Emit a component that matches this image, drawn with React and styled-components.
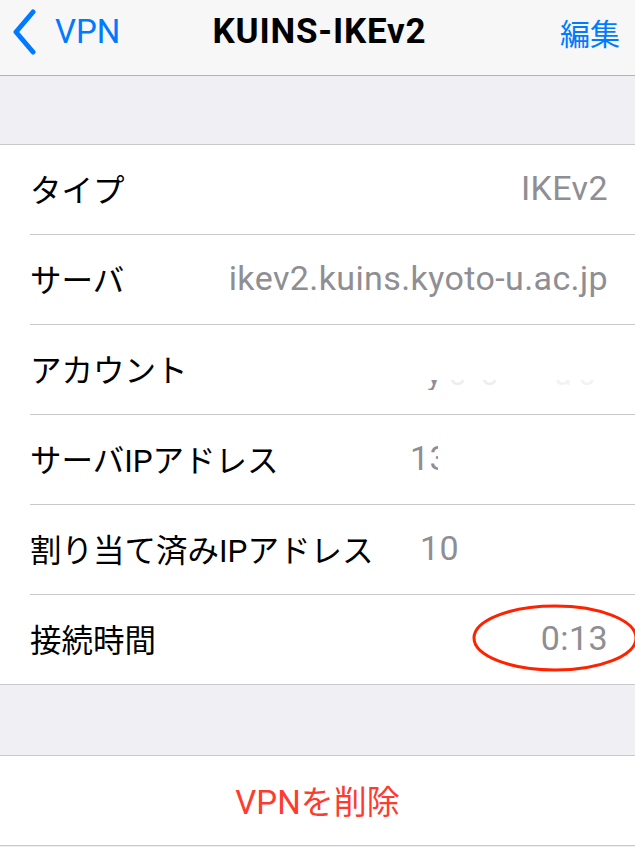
import React from "react";
import styled, { createGlobalStyle } from "styled-components";

const GlobalStyle = createGlobalStyle`
  html, body {
    margin: 0;
    padding: 0;
    background: #efeff4;
  }
  body {
    font-family: Roboto, "Noto Sans CJK JP", sans-serif;
    -webkit-font-smoothing: antialiased;
  }
`;

const Screen = styled.div`
  width: 635px;
  min-height: 847px;
  background: #efeff4;
  overflow: hidden;
`;

const NavBar = styled.div`
  height: 75px;
  background: #f7f7f8;
  border-bottom: 1px solid #b2b2b2;
  display: grid;
  grid-template-columns: 1fr auto 1fr;
  align-items: center;
  padding: 0 15px 0 11px;
`;

const BackButton = styled.div`
  display: flex;
  align-items: center;
  gap: 18px;
  color: #007aff;
  font-size: 33px;
  padding-bottom: 12px;
`;

const Title = styled.div`
  font-size: 35px;
  font-weight: 700;
  letter-spacing: 0.8px;
  color: #000;
  padding-bottom: 12px;
  transform: translateX(4px);
`;

const EditButton = styled.div`
  justify-self: end;
  color: #007aff;
  font-size: 30px;
  padding-bottom: 12px;
`;

const Spacer = styled.div`
  height: ${p => p.$h}px;
`;

const Group = styled.div`
  background: #fff;
  border-top: 1px solid #c8c7cc;
  border-bottom: 1px solid #c8c7cc;
`;

const Row = styled.div`
  position: relative;
  height: 89px;
  display: flex;
  align-items: center;
  padding-left: 30px;
  & + & {
    border-top: 1px solid transparent;
  }
  & + &::before {
    content: "";
    position: absolute;
    top: -1px;
    left: 30px;
    right: 0;
    height: 1px;
    background: #c8c7cc;
  }
`;

const Label = styled.div`
  font-size: 31.5px;
  color: #000;
  white-space: nowrap;
  padding-bottom: 4px;
`;

const Value = styled.div`
  margin-left: auto;
  margin-right: ${p => p.$offset || 27}px;
  font-size: 34px;
  letter-spacing: 0.4px;
  color: #8e8e93;
  white-space: nowrap;
  overflow: hidden;
  padding-bottom: 4px;
  ${p => (p.$clip ? `width: ${p.$clip}px;` : "")}
`;

const FaintDot = styled.span`
  color: #d8d8dc;
`;

const Scrap = styled.div`
  margin-left: auto;
  margin-right: 26px;
  width: 190px;
  height: 10px;
  margin-top: 30px;
  position: relative;
  overflow: hidden;
`;

const ScrapText = styled.span`
  position: absolute;
  left: 0;
  bottom: 0;
  line-height: 30px;
  font-size: 30px;
  color: ${p => p.$color};
  white-space: nowrap;
`;

const Annotation = styled.svg`
  position: absolute;
  right: -6px;
  top: 8px;
  pointer-events: none;
`;

const DeleteRow = styled.div`
  height: 89px;
  display: flex;
  align-items: center;
  justify-content: center;
  color: #ff3b30;
  font-size: 33px;
  padding-bottom: 2px;
  box-sizing: border-box;
`;

const Chevron = () => (
  <svg width="26" height="46" viewBox="0 0 26 46">
    <path
      d="M22 3 L5 23 L22 43"
      fill="none"
      stroke="#007aff"
      strokeWidth="5"
      strokeLinecap="round"
      strokeLinejoin="round"
    />
  </svg>
);

export default function App() {
  return (
    <Screen>
      <GlobalStyle />
      <NavBar>
        <BackButton>
          <Chevron />
          VPN
        </BackButton>
        <Title>KUINS-IKEv2</Title>
        <EditButton>編集</EditButton>
      </NavBar>
      <Spacer $h={68} />
      <Group>
        <Row>
          <Label>タイプ</Label>
          <Value>IKEv2</Value>
        </Row>
        <Row>
          <Label>サーバ</Label>
          <Value>ikev2.kuins.kyoto-u.ac.jp</Value>
        </Row>
        <Row>
          <Label>アカウント</Label>
          <Scrap>
            <ScrapText $color="#8e8e93" style={{ left: 8 }}>y</ScrapText>
            <ScrapText $color="#ededf0" style={{ left: 30 }}>
              o&nbsp;&nbsp;o
            </ScrapText>
            <ScrapText $color="#f2f2f4" style={{ left: 136 }}>
              a&nbsp;c
            </ScrapText>
          </Scrap>
        </Row>
        <Row>
          <Label>サーバIPアドレス</Label>
          <Value $clip={28} $offset={197}>
            133
          </Value>
        </Row>
        <Row>
          <Label>割り当て済みIPアドレス</Label>
          <Value $clip={41} $offset={174}>
            10<FaintDot>.</FaintDot>
          </Value>
        </Row>
        <Row>
          <Label>接続時間</Label>
          <Value>0:13</Value>
          <Annotation width="170" height="72" viewBox="0 0 170 72">
            <ellipse
              cx="84"
              cy="35"
              rx="81"
              ry="32"
              fill="none"
              stroke="#ff2200"
              strokeWidth="3"
            />
          </Annotation>
        </Row>
      </Group>
      <Spacer $h={70} />
      <Group>
        <DeleteRow>VPNを削除</DeleteRow>
      </Group>
    </Screen>
  );
}
